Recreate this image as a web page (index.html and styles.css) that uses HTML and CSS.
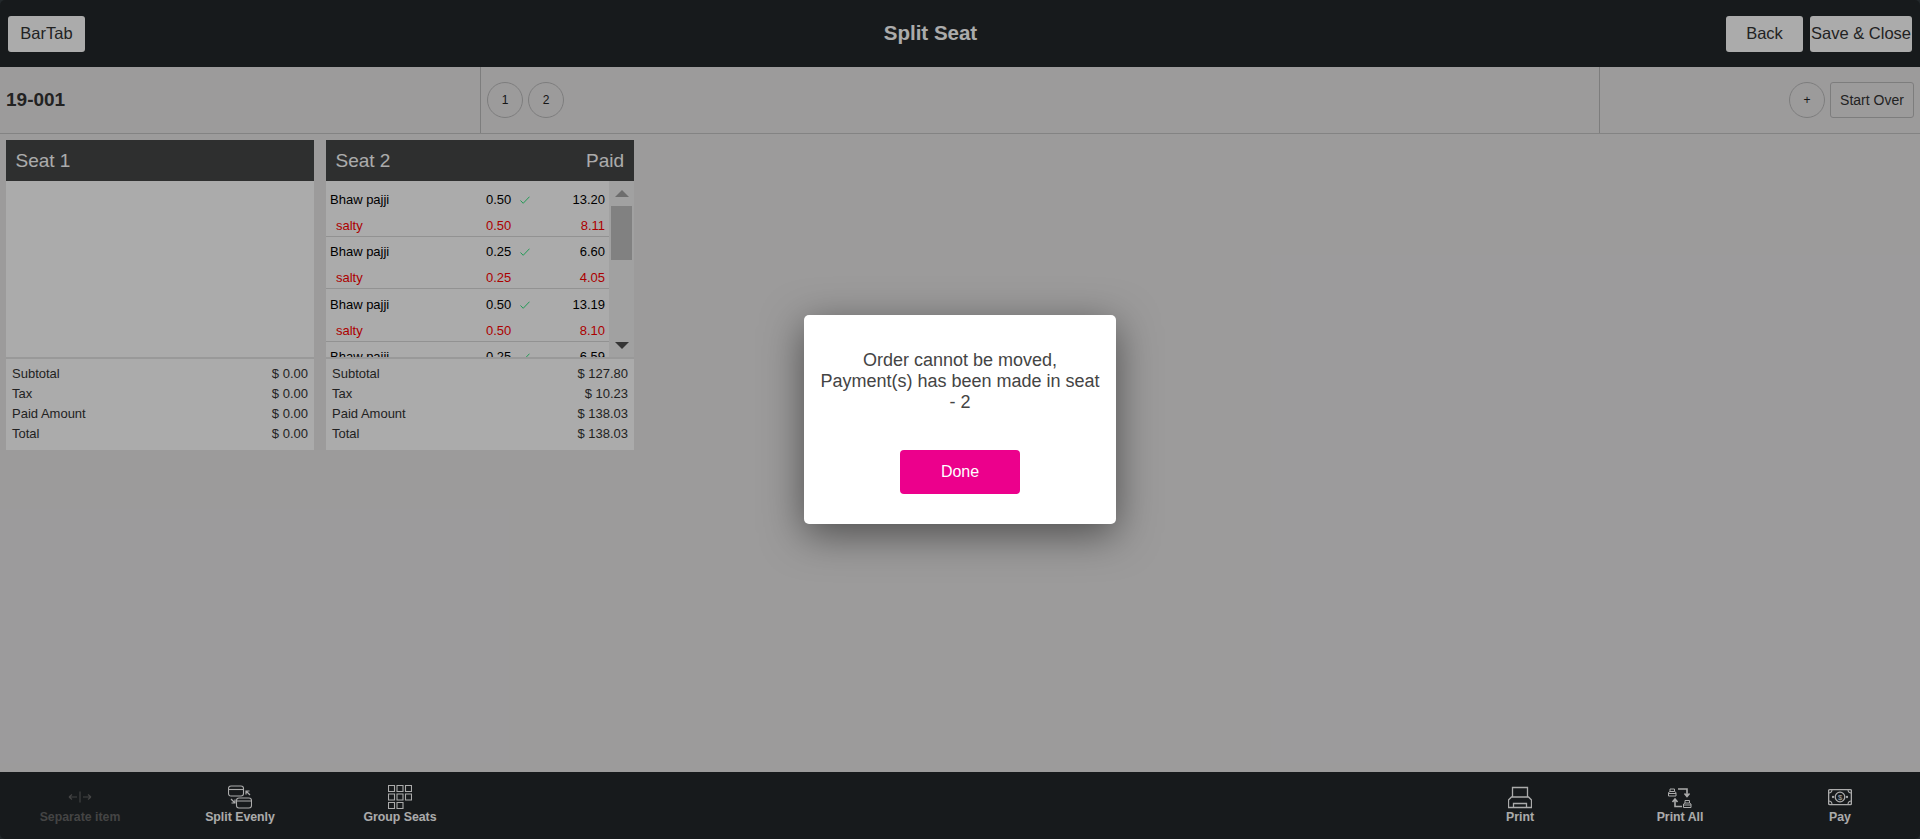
FILE: index.html
```html
<!DOCTYPE html>
<html lang="en">
<head>
    <meta charset="UTF-8">
    <meta name="viewport" content="width=device-width, initial-scale=1.0">
    <title>Split Seat</title>
    <link rel="stylesheet" href="styles.css">
</head>
<body>
    <header class="top-bar">
        <button class="bar-btn bartab-btn">BarTab</button>
        <h1 class="page-title">Split Seat</h1>
        <div class="top-actions">
            <button class="bar-btn back-btn">Back</button>
            <button class="bar-btn save-btn">Save &amp; Close</button>
        </div>
    </header>

    <section class="seat-nav">
        <div class="order-no">19-001</div>
        <div class="seat-tabs">
            <button class="circle-btn">1</button>
            <button class="circle-btn">2</button>
        </div>
        <div class="seat-tools">
            <button class="circle-btn">+</button>
            <button class="start-over">Start Over</button>
        </div>
    </section>

    <main class="seats">
        <div class="seat-card">
            <div class="seat-head"><span>Seat 1</span></div>
            <div class="seat-body"></div>
            <div class="totals">
                <div class="total-row"><span>Subtotal</span><span>$ 0.00</span></div>
                <div class="total-row"><span>Tax</span><span>$ 0.00</span></div>
                <div class="total-row"><span>Paid Amount</span><span>$ 0.00</span></div>
                <div class="total-row"><span>Total</span><span>$ 0.00</span></div>
            </div>
        </div>

        <div class="seat-card">
            <div class="seat-head"><span>Seat 2</span><span>Paid</span></div>
            <div class="seat-body">
                <div class="item-list">
                    <div class="item">
                        <div class="item-line"><span>Bhaw pajji</span><span class="qty">0.50 <svg class="check" viewBox="0 0 10 8"><path d="M0.5 4.5 3.2 7.3 9.5 0.7"/></svg></span><span>13.20</span></div>
                        <div class="item-line modifier"><span>salty</span><span class="qty">0.50</span><span>8.11</span></div>
                    </div>
                    <div class="item">
                        <div class="item-line"><span>Bhaw pajji</span><span class="qty">0.25 <svg class="check" viewBox="0 0 10 8"><path d="M0.5 4.5 3.2 7.3 9.5 0.7"/></svg></span><span>6.60</span></div>
                        <div class="item-line modifier"><span>salty</span><span class="qty">0.25</span><span>4.05</span></div>
                    </div>
                    <div class="item">
                        <div class="item-line"><span>Bhaw pajji</span><span class="qty">0.50 <svg class="check" viewBox="0 0 10 8"><path d="M0.5 4.5 3.2 7.3 9.5 0.7"/></svg></span><span>13.19</span></div>
                        <div class="item-line modifier"><span>salty</span><span class="qty">0.50</span><span>8.10</span></div>
                    </div>
                    <div class="item">
                        <div class="item-line"><span>Bhaw pajji</span><span class="qty">0.25 <svg class="check" viewBox="0 0 10 8"><path d="M0.5 4.5 3.2 7.3 9.5 0.7"/></svg></span><span>6.59</span></div>
                    </div>
                </div>
                <div class="scroll-track">
                    <span class="arrow-up"></span>
                    <span class="scroll-thumb"></span>
                    <span class="arrow-down"></span>
                </div>
            </div>
            <div class="totals">
                <div class="total-row"><span>Subtotal</span><span>$ 127.80</span></div>
                <div class="total-row"><span>Tax</span><span>$ 10.23</span></div>
                <div class="total-row"><span>Paid Amount</span><span>$ 138.03</span></div>
                <div class="total-row"><span>Total</span><span>$ 138.03</span></div>
            </div>
        </div>
    </main>

    <footer class="bottom-bar">
        <div class="bottom-group">
            <div class="bottom-item disabled">
                <svg class="bottom-icon" viewBox="0 0 24 24"><path d="M1 12H9M1 12 4 9.5M1 12 4 14.5M12 6.5V17.5M15 12H23M23 12 20 9.5M23 12 20 14.5"/></svg>
                <span>Separate item</span>
            </div>
            <div class="bottom-item">
                <svg class="bottom-icon" viewBox="0 0 24 24"><rect x="0.5" y="1" width="15" height="10" rx="2.5"/><path d="M0.5 4.5H15.5"/><rect x="8.5" y="13" width="15" height="10" rx="2.5"/><path d="M8.5 16H23.5M18 6 22 10M18 9.500V6H21.500M7 18 3 14M7 14.500V18H3.500" stroke-width="1.200"/></svg>
                <span>Split Evenly</span>
            </div>
            <div class="bottom-item">
                <svg class="bottom-icon" viewBox="0 0 24 24"><path d="M0.5 0.5h6v6h-6zM9 0.5h6v6H9zM17.5 0.5h6v6h-6zM0.5 9h6v6h-6zM9 9h6v6H9zM17.5 9h6v6h-6zM0.5 17.5h6v6h-6zM9 17.5h6v6H9z"/></svg>
                <span>Group Seats</span>
            </div>
        </div>
        <div class="bottom-group">
            <div class="bottom-item">
                <svg class="bottom-icon" viewBox="0 0 24 24"><path d="M4.500 12V2.500H19.500V12M3.500 12H20.500L23.500 15V22.500H0.500V15ZM5.500 22.500V18.500H18.500V22.500" stroke-width="1.300"/></svg>
                <span>Print</span>
            </div>
            <div class="bottom-item">
                <svg class="bottom-icon" viewBox="0 0 24 24"><path d="M0.500 11V7.500L2 6.500H6.500L8 7.500V11ZM0.500 8.500H8M2 6.500V4H6.500V6.500M15.500 22.500V19L17 18H21.500L23 19V22.500ZM15.500 20H23M17 18V15.500H21.500V18" stroke-width="1"/><path d="M10 4H19V11M16.500 8.500 19 11.500 21.500 8.500M14 21.500H7V14.500M4.500 17 7 14 9.500 17" stroke-width="1.600"/></svg>
                <span>Print All</span>
            </div>
            <div class="bottom-item">
                <svg class="bottom-icon" viewBox="0 0 24 24"><rect x="0.600" y="4.600" width="22.800" height="15" rx="1" stroke-width="1.400"/><path d="M0.500 8A3.500 3.500 0 0 0 4 4.500M20 4.500A3.500 3.500 0 0 0 23.500 8M0.500 16A3.500 3.500 0 0 1 4 19.500M20 19.500A3.500 3.500 0 0 1 23.500 16"/><circle cx="12" cy="12" r="4.800" stroke-width="1.300"/><circle cx="5" cy="12" r="0.600"/><circle cx="19" cy="12" r="0.600"/><text class="dollar" x="12" y="14.600" text-anchor="middle">$</text></svg>
                <span>Pay</span>
            </div>
        </div>
    </footer>

    <div class="overlay">
        <div class="modal">
            <p class="modal-text">Order cannot be moved, Payment(s) has been made in seat - 2</p>
            <button class="done-btn">Done</button>
        </div>
    </div>
</body>
</html>
```

FILE: styles.css
```css
* {
    box-sizing: border-box;
}
body {
    font-family: "Liberation Sans", Arial, sans-serif;
    margin: 0;
    padding: 0;
    height: 839px;
    overflow: hidden;
    display: flex;
    flex-direction: column;
    background-color: #e9e7e8;
    color: #333;
}
button {
    font-family: inherit;
    cursor: pointer;
}

/* top bar */
.top-bar {
    height: 67px;
    flex-shrink: 0;
    display: flex;
    align-items: center;
    padding: 0 8px;
    background-color: #23282b;
}
.page-title {
    flex: 1;
    margin: 0;
    padding: 0 0 2px 50px;
    text-align: center;
    font-size: 20.5px;
    font-weight: bold;
    color: white;
}
.top-actions {
    display: flex;
    gap: 7px;
}
.bar-btn {
    height: 36px;
    padding: 0;
    background: white;
    color: #333;
    border: none;
    border-radius: 3px;
    font-size: 16.5px;
}
.bartab-btn {
    width: 77px;
}
.back-btn {
    width: 77px;
}
.save-btn {
    width: 102px;
}

/* order number and seat tabs */
.seat-nav {
    height: 67px;
    flex-shrink: 0;
    display: grid;
    grid-template-columns: 3fr 7fr 2fr;
    border-bottom: 1px solid #c4c4c4;
}
.order-no {
    display: flex;
    align-items: center;
    padding-left: 6px;
    font-size: 19px;
    font-weight: bold;
}
.seat-tabs {
    display: flex;
    align-items: center;
    gap: 5px;
    padding-left: 6px;
    border-left: 1px solid #bbb;
    border-right: 1px solid #bbb;
}
.seat-tools {
    display: flex;
    align-items: center;
    justify-content: flex-end;
    gap: 5px;
    padding-right: 6px;
}
.circle-btn {
    width: 36px;
    height: 36px;
    padding: 0;
    background: transparent;
    color: #222;
    border: 1px solid #bbb;
    border-radius: 50%;
    font-size: 12px;
}
.start-over {
    width: 84px;
    height: 36px;
    padding: 0;
    background: transparent;
    color: #333;
    border: 1px solid #bbb;
    border-radius: 3px;
    font-size: 14px;
}

/* seat cards */
.seats {
    flex: 1;
    display: flex;
    align-items: flex-start;
    gap: 12px;
    padding: 6px;
}
.seat-card {
    width: 308px;
    height: 310px;
    display: flex;
    flex-direction: column;
    background: white;
}
.seat-head {
    height: 41px;
    flex-shrink: 0;
    display: flex;
    align-items: center;
    justify-content: space-between;
    padding: 0 10px 0 9.5px;
    background-color: #454747;
    color: white;
    font-size: 19px;
}
.seat-body {
    height: 176px;
    flex-shrink: 0;
    display: flex;
    overflow: hidden;
}
.item-list {
    flex: 1;
    padding-top: 3px;
    overflow: hidden;
}
.item {
    padding: 5.5px 0 2px;
    border-bottom: 1px solid #dadada;
}
.item-line {
    display: grid;
    grid-template-columns: 156px 1fr auto;
    height: 20px;
    line-height: 20px;
    padding: 0 4px;
    font-size: 13px;
    color: black;
}
.modifier {
    height: 16px;
    line-height: 16px;
    margin-top: 8px;
    padding-left: 10px;
    grid-template-columns: 150px 1fr auto;
    color: #f00;
}
.check {
    width: 10px;
    height: 8px;
    margin-left: 5px;
    fill: none;
    stroke: #33e67f;
    stroke-width: 1;
}
.scroll-track {
    width: 25px;
    flex-shrink: 0;
    display: flex;
    flex-direction: column;
    align-items: center;
    padding: 9px 0 8px;
    background-color: #f1f1f1;
}
.arrow-up {
    width: 0;
    height: 0;
    border-left: 7px solid transparent;
    border-right: 7px solid transparent;
    border-bottom: 7px solid #a3a3a3;
}
.arrow-down {
    width: 0;
    height: 0;
    margin-top: auto;
    border-left: 7px solid transparent;
    border-right: 7px solid transparent;
    border-top: 7px solid #505050;
}
.scroll-thumb {
    width: 21px;
    height: 54px;
    margin-top: 9px;
    background-color: #c1c1c1;
}
.totals {
    flex: 1;
    padding: 5px 6px 0 6px;
    border-top: 2px solid #e4e4e4;
}
.total-row {
    display: flex;
    justify-content: space-between;
    height: 20px;
    line-height: 20px;
    font-size: 13px;
}

/* bottom bar */
.bottom-bar {
    height: 67px;
    flex-shrink: 0;
    display: flex;
    justify-content: space-between;
    background-color: #23282b;
}
.bottom-group {
    display: flex;
}
.bottom-item {
    width: 160px;
    display: flex;
    flex-direction: column;
    align-items: center;
    padding-top: 13px;
    color: white;
    font-size: 12.3px;
    font-weight: bold;
}
.bottom-item span {
    line-height: 16px;
}
.bottom-item.disabled {
    color: #666;
}
.bottom-icon {
    width: 24px;
    height: 24px;
    fill: none;
    stroke: currentColor;
    stroke-width: 1.1;
}
.dollar {
    fill: currentColor;
    stroke: none;
    font-size: 7.5px;
    font-weight: normal;
}

/* popup */
.overlay {
    position: absolute;
    top: 0;
    left: 0;
    width: 100%;
    height: 100%;
    display: flex;
    align-items: center;
    justify-content: center;
    background-color: rgba(0, 0, 0, 0.33);
    border-radius: 5px;
}
.modal {
    width: 312px;
    height: 209px;
    padding: 35px 14px 30px;
    text-align: center;
    background: white;
    border-radius: 5px;
    box-shadow: 0 10px 40px rgba(0, 0, 0, 0.5);
}
.modal-text {
    margin: 0 0 37px;
    font-size: 18px;
    line-height: 21px;
    color: #444;
}
.done-btn {
    width: 120px;
    height: 44px;
    background-color: #ec008c;
    color: white;
    border: none;
    border-radius: 4px;
    font-size: 16px;
}
```
